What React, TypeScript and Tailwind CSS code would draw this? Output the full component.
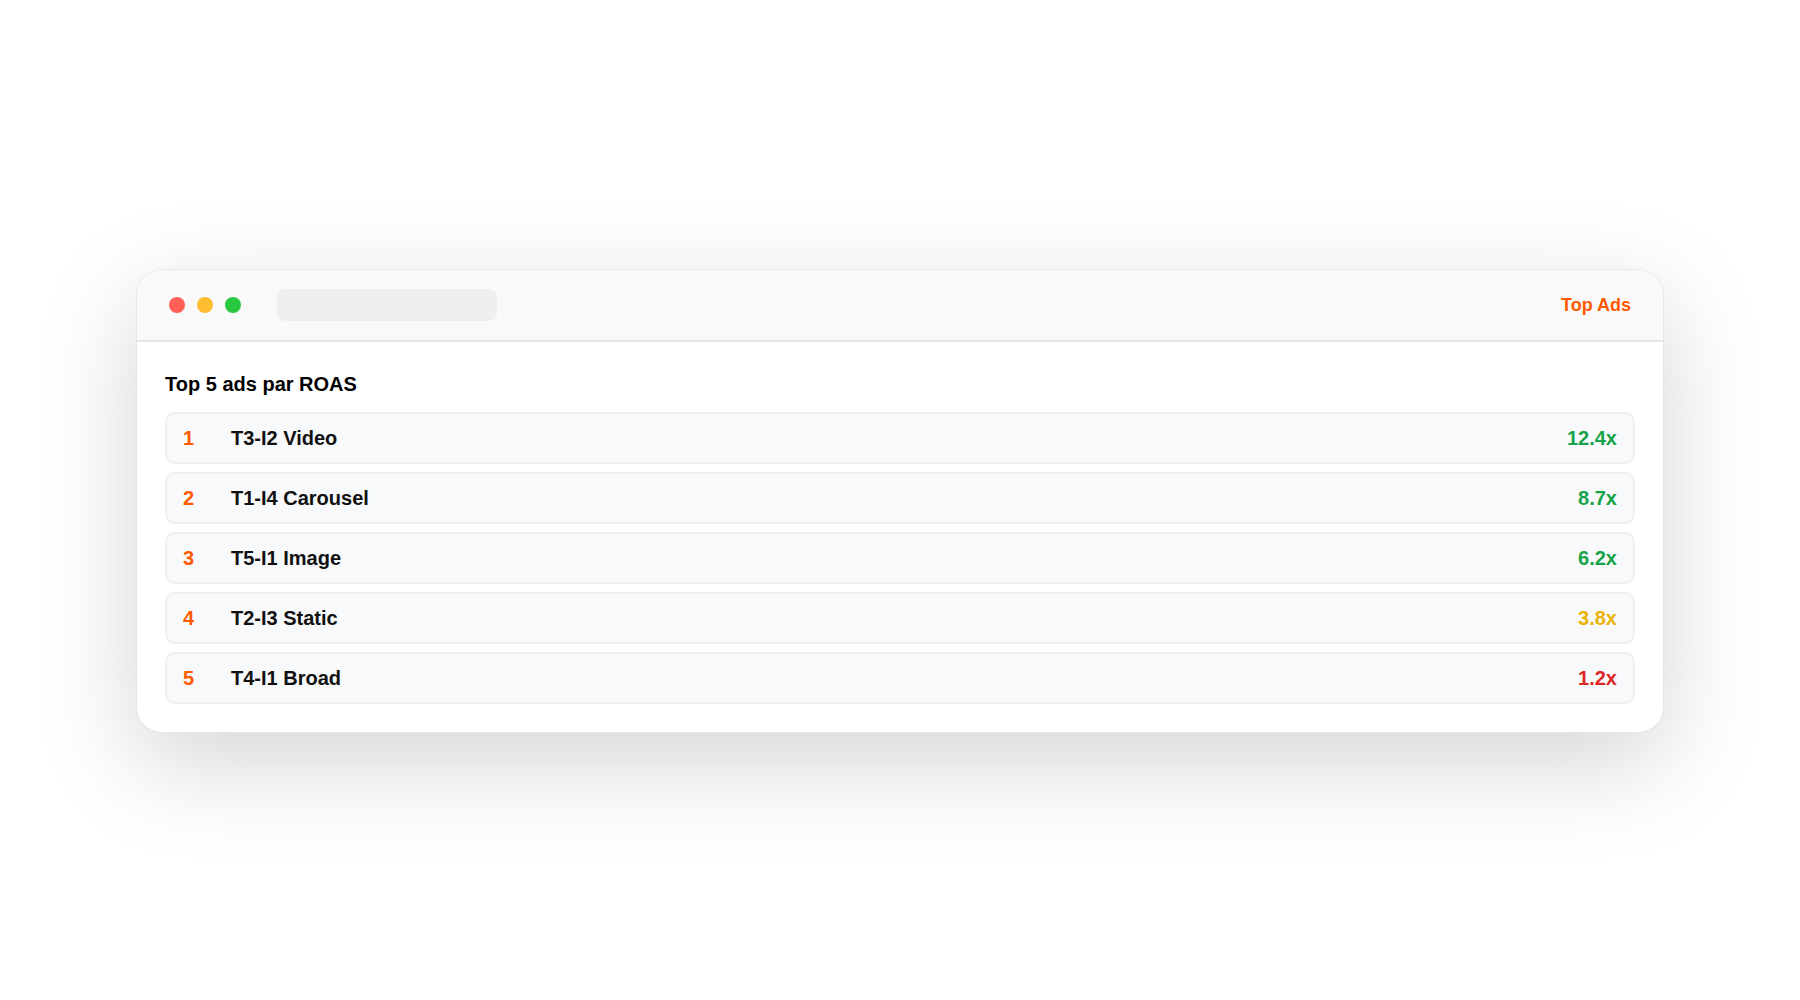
const ads = [
  { rank: 1, name: 'T3-I2 Video', roas: '12.4x', tone: 'text-[#16a34a]' },
  { rank: 2, name: 'T1-I4 Carousel', roas: '8.7x', tone: 'text-[#16a34a]' },
  { rank: 3, name: 'T5-I1 Image', roas: '6.2x', tone: 'text-[#16a34a]' },
  { rank: 4, name: 'T2-I3 Static', roas: '3.8x', tone: 'text-[#eab308]' },
  { rank: 5, name: 'T4-I1 Broad', roas: '1.2x', tone: 'text-[#dc2626]' },
];

export default function App() {
  return (
    <div
      className="w-full h-[1000px] bg-white flex items-center justify-center"
      style={{ fontFamily: '"Liberation Sans", Arial, sans-serif' }}
    >
      <div className="w-[1528px] mt-[2px] rounded-[26px] border border-[#e8e8ea] bg-white overflow-hidden shadow-[0_30px_100px_rgba(0,0,0,0.17)]">
        {/* Title bar */}
        <div className="h-[72px] flex items-center px-8 bg-[#f9f9fa] border-b-2 border-[#e6e6ea]">
          <div className="flex items-center gap-3">
            <span className="w-4 h-4 rounded-full bg-[#ff5f57]" />
            <span className="w-4 h-4 rounded-full bg-[#febc2e]" />
            <span className="w-4 h-4 rounded-full bg-[#28c840]" />
          </div>
          <div className="ml-9 w-[220px] h-8 rounded-lg bg-[#efefef]" />
          <div className="ml-auto text-lg font-bold text-[#ff5a00]">Top Ads</div>
        </div>

        {/* Content */}
        <div className="p-7">
          <h2 className="text-xl font-bold text-black mb-3.5">Top 5 ads par ROAS</h2>
          <div className="flex flex-col gap-2">
            {ads.map((ad) => (
              <div
                key={ad.rank}
                className="h-[52px] flex items-center px-4 rounded-[10px] bg-[#f8f9fa] border-2 border-[#eeeff1]"
              >
                <span className="w-12 text-xl font-bold text-[#ff5a00]">{ad.rank}</span>
                <span className="text-xl font-bold text-[#111]">{ad.name}</span>
                <span className={`ml-auto text-xl font-bold ${ad.tone}`}>{ad.roas}</span>
              </div>
            ))}
          </div>
        </div>
      </div>
    </div>
  );
}
